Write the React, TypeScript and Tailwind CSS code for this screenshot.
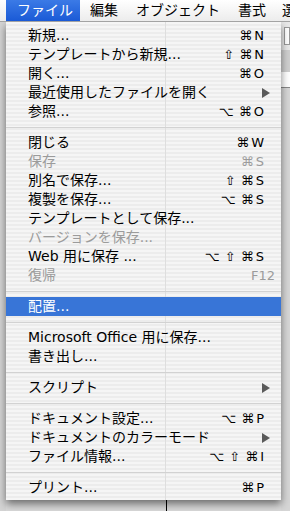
type Item =
  | { sep: true }
  | {
      sep?: false;
      label: string;
      keys?: string[];
      disabled?: boolean;
      submenu?: boolean;
      selected?: boolean;
      wide?: boolean;
    };

const items: Item[] = [
  { label: "新規...", keys: ["⌘", "N"] },
  { label: "テンプレートから新規...", keys: ["⇧", "⌘", "N"] },
  { label: "開く...", keys: ["⌘", "O"] },
  { label: "最近使用したファイルを開く", submenu: true },
  { label: "参照...", keys: ["⌥", "⌘", "O"] },
  { sep: true },
  { label: "閉じる", keys: ["⌘", "W"] },
  { label: "保存", keys: ["⌘", "S"], disabled: true },
  { label: "別名で保存...", keys: ["⇧", "⌘", "S"] },
  { label: "複製を保存...", keys: ["⌥", "⌘", "S"] },
  { label: "テンプレートとして保存..." },
  { label: "バージョンを保存...", disabled: true },
  { label: "Web 用に保存 ...", keys: ["⌥", "⇧", "⌘", "S"] },
  { label: "復帰", keys: ["F12"], disabled: true, wide: true },
  { sep: true },
  { label: "配置...", selected: true },
  { sep: true },
  { label: "Microsoft Office 用に保存..." },
  { label: "書き出し..." },
  { sep: true },
  { label: "スクリプト", submenu: true },
  { sep: true },
  { label: "ドキュメント設定...", keys: ["⌥", "⌘", "P"] },
  { label: "ドキュメントのカラーモード", submenu: true },
  { label: "ファイル情報...", keys: ["⌥", "⇧", "⌘", "I"] },
  { sep: true },
  { label: "プリント...", keys: ["⌘", "P"] },
];

function Arrow() {
  return (
    <svg width="8" height="10" viewBox="0 0 8 10">
      <path d="M0 0 L8 5 L0 10 Z" fill="#5a5a5a" />
    </svg>
  );
}

function MenuRow({ item }: { item: Item }) {
  if (item.sep) {
    return (
      <div className="flex h-[12px] items-center">
        <div className="h-px w-full bg-[#d2d2d2]" />
      </div>
    );
  }
  const color = item.selected
    ? "text-white"
    : item.disabled
      ? "text-[#9b9b9b]"
      : "text-black";
  const keys = item.keys ?? [];
  const mods = keys.slice(0, -1);
  const last = keys[keys.length - 1];
  return (
    <div
      className={`flex h-[19px] items-center justify-between pl-[22px] ${
        item.selected ? "bg-[#3875d7]" : ""
      } ${item.submenu ? "pr-[11px]" : item.wide ? "pr-[6px]" : "pr-[17px]"} ${color}`}
    >
      <span className="whitespace-nowrap leading-[19px]">{item.label}</span>
      {item.keys && (
        <span className="flex items-center gap-[2px] text-[13px] leading-[19px]">
          {mods.length > 0 && (
            <span className="flex gap-[5px]">
              {mods.map((k, i) => (
                <span key={i}>{k}</span>
              ))}
            </span>
          )}
          <span>{last}</span>
        </span>
      )}
      {item.submenu && <Arrow />}
    </div>
  );
}

export default function App() {
  return (
    <div className="flex h-[511px] w-[290px] flex-col overflow-hidden bg-[#d9d9d9] font-['DejaVu_Sans','Noto_Sans_CJK_JP',sans-serif] text-[14px]">
      <div className="relative z-20 flex h-[22px] shrink-0 items-center border-b border-[#a3a3a3] bg-[linear-gradient(180deg,#ffffff,#ececec)] pl-[6px] text-black">
        <div className="flex h-full w-[74px] shrink-0 items-center pl-[11px] bg-[linear-gradient(180deg,#3b7ae6,#1a5ad6)] text-white">
          ファイル
        </div>
        <div className="flex h-full w-[47px] shrink-0 items-center pl-[10px]">編集</div>
        <div className="flex h-full w-[102px] shrink-0 items-center pl-[9px]">オブジェクト</div>
        <div className="flex h-full w-[44px] shrink-0 items-center pl-[9px]">書式</div>
        <div className="flex h-full shrink-0 items-center pl-[9px]">選</div>
      </div>

      <div className="flex flex-1">
        <div className="w-[6px] shrink-0 bg-[#d4d4d4]" />
        <div className="flex w-[275px] shrink-0 flex-col">
          <div className="relative z-10 bg-[linear-gradient(90deg,transparent_159px,#dedede_159px,#dedede_160px,transparent_160px),repeating-linear-gradient(180deg,#f5f5f5_0px,#f5f5f5_2px,#ececec_2px,#ececec_4px)] pb-[3px] pt-[4px] shadow-[0_4px_8px_rgba(0,0,0,0.5)]">
            {items.map((it, i) => (
              <MenuRow key={i} item={it} />
            ))}
          </div>
          <div className="flex flex-1">
            <div className="ml-[160px] w-px bg-black" />
          </div>
        </div>
        <div className="flex flex-1 flex-col overflow-hidden">
          <div className="flex h-[28px] items-center bg-[#e8e8e8]">
            <div className="ml-[3px] h-[18px] flex-1 border border-[#9a9a9a] bg-white" />
          </div>
          <div className="h-[22px] bg-[#cfcfcf]" />
          <div className="h-[16px] border-b border-[#888] bg-white" />
          <div className="flex-1 bg-[#d6d6d6]" />
        </div>
      </div>
    </div>
  );
}
